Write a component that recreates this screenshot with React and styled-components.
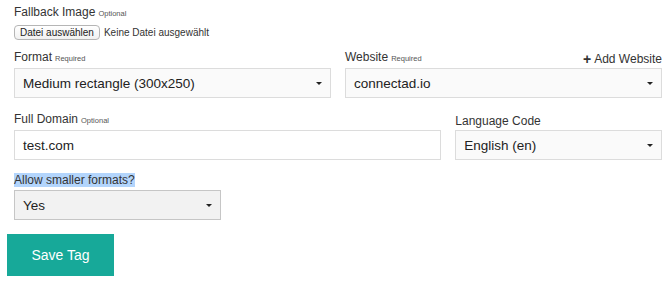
import React from 'react';
import styled, { createGlobalStyle } from 'styled-components';

const GlobalStyle = createGlobalStyle`
  body {
    margin: 0;
    background: #ffffff;
    font-family: "Liberation Sans", Arial, sans-serif;
    color: #333333;
  }
`

const Page = styled.div`
  width: 670px;
  padding: 6px 8px 0 7px;
  box-sizing: border-box;
`

const Fields = styled.div`
  display: grid;
  grid-template-columns: repeat(6, 1fr);
  column-gap: 14px;
  padding-left: 7px;
`

const Field = styled.div`
  grid-column: span ${p => p.span};
  display: flex;
  flex-direction: column;
  margin-bottom: ${p => p.gap ?? 14}px;
`

const LabelRow = styled.div`
  display: flex;
  justify-content: space-between;
  align-items: flex-end;
  height: ${p => p.h || 16}px;
  margin-bottom: 2px;
`

const Label = styled.label`
  font-size: 12px;
  line-height: 14px;
  color: #333;
  background: ${p => (p.selected ? '#b3d5fc' : 'transparent')};
`

const Hint = styled.small`
  font-size: 7.5px;
  color: #555;
  margin-left: 3px;
`

const AddLink = styled.a`
  font-size: 12px;
  line-height: 14px;
  color: #333;
  text-decoration: none;
  display: flex;
  align-items: center;
  gap: 3px;
`

const Plus = styled.span`
  font-weight: bold;
  font-size: 14px;
  line-height: 13px;
`

const FileRow = styled.div`
  display: flex;
  align-items: center;
  gap: 4px;
  font-size: 10px;
  color: #333;
  margin-top: 2px;
  margin-bottom: 10px;
`

const FileButton = styled.button`
  font-family: inherit;
  font-size: 10px;
  color: #222;
  height: 15px;
  padding: 0 5px;
  border: 1px solid #b5b5b5;
  border-radius: 4px;
  background: linear-gradient(#ffffff, #f1f1f1);
  line-height: 13px;
`

const SelectBox = styled.div`
  height: 30px;
  box-sizing: border-box;
  border: 1px solid ${p => (p.dark ? '#c6c6c6' : '#dcdcdc')};
  background: ${p => (p.dark ? '#f2f2f2' : '#fafafa')};
  display: flex;
  align-items: center;
  justify-content: space-between;
  padding: 0 8px 0 8px;
  font-size: 13.5px;
  color: #222;
`

const Caret = styled.span`
  width: 0;
  height: 0;
  border-left: 3px solid transparent;
  border-right: 3px solid transparent;
  border-top: 3px solid #222;
`

const TextInput = styled.div`
  height: 30px;
  box-sizing: border-box;
  border: 1px solid #dcdcdc;
  background: #fff;
  display: flex;
  align-items: center;
  padding: 0 8px;
  font-size: 13.5px;
  color: #222;
`

const SaveButton = styled.button`
  width: 107px;
  height: 42px;
  border: none;
  background: #17a999;
  color: #fff;
  font-family: inherit;
  font-size: 14px;
`

const Select = ({ value, dark }) => (
  <SelectBox dark={dark}>
    <span>{value}</span>
    <Caret />
  </SelectBox>
)

const App = () => {
  return (
    <>
      <GlobalStyle />
      <Page>
        <Fields>
          <Field span={6} gap={0}>
            <LabelRow h={15}>
              <Label>Fallback Image<Hint>Optional</Hint></Label>
            </LabelRow>
            <FileRow>
              <FileButton>Datei auswählen</FileButton>
              <span>Keine Datei ausgewählt</span>
            </FileRow>
          </Field>

          <Field span={3}>
            <LabelRow>
              <Label>Format<Hint>Required</Hint></Label>
            </LabelRow>
            <Select value="Medium rectangle (300x250)" />
          </Field>
          <Field span={3}>
            <LabelRow>
              <Label>Website<Hint>Required</Hint></Label>
              <AddLink href="#"><Plus>+</Plus>Add Website</AddLink>
            </LabelRow>
            <Select value="connectad.io" />
          </Field>

          <Field span={4} gap={12}>
            <LabelRow>
              <Label>Full Domain<Hint>Optional</Hint></Label>
            </LabelRow>
            <TextInput>test.com</TextInput>
          </Field>
          <Field span={2} gap={12}>
            <LabelRow>
              <Label>Language Code</Label>
            </LabelRow>
            <Select value="English (en)" />
          </Field>

          <Field span={2}>
            <LabelRow>
              <div><Label selected>Allow smaller formats?</Label></div>
            </LabelRow>
            <Select value="Yes" dark />
          </Field>
        </Fields>
        <SaveButton>Save Tag</SaveButton>
      </Page>
    </>
  )
}

export default App;
